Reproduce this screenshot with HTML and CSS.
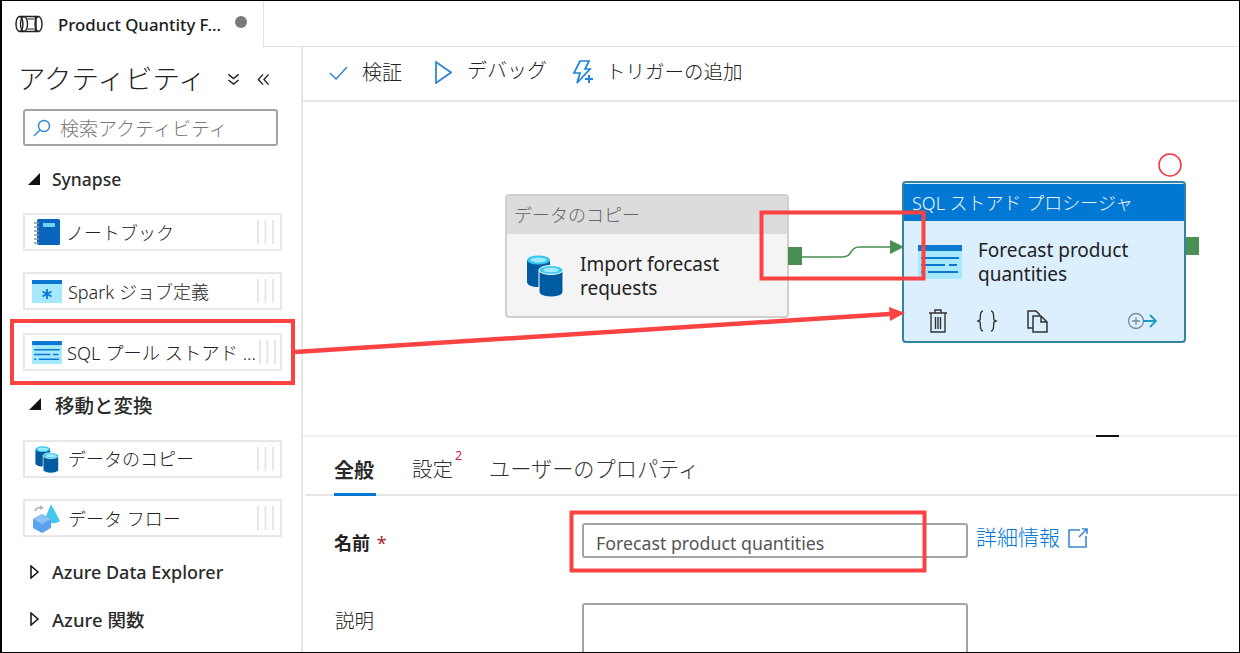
FILE: index.html
```html
<!DOCTYPE html>
<html lang="ja">
<head>
<meta charset="utf-8">
<title>Product Quantity Forecast</title>
<link rel="stylesheet" href="styles.css">
</head>
<body>
<svg class="defs" width="0" height="0">
  <defs>
    <symbol id="i-db" viewBox="0 0 38 42">
      <path d="M1 5v22c0 3 5 5 11 5s12-2 12-5V5z" fill="#005ba1"/>
      <ellipse cx="12.500" cy="5" rx="11.500" ry="4.500" fill="#37c6f0"/>
      <ellipse cx="12.500" cy="5" rx="8" ry="2.500" fill="#9cebff"/>
      <path d="M13 15v22c0 3 6 5 12 5s12-2 12-5V15z" fill="#005ba1" stroke="#fff" stroke-width="1"/>
      <ellipse cx="25" cy="15" rx="12" ry="4.500" fill="#37c6f0" stroke="#fff" stroke-width="1"/>
      <ellipse cx="25" cy="15" rx="8" ry="2.500" fill="#9cebff"/>
    </symbol>
    <symbol id="i-sql" viewBox="0 0 44 34">
      <rect width="44" height="34" rx="1" fill="#a6e9ff"/>
      <rect width="44" height="6" fill="#0a78d1"/>
      <path d="M3 13h38M3 20h24M31 20h8M3 27h3M10 27h30" stroke="#0a78d1" stroke-width="2"/>
    </symbol>
  </defs>
</svg>
<div class="frame">
  <header class="tabbar">
    <div class="tab">
      <svg class="tab-icon" width="28" height="18" viewBox="0 0 28 18" fill="none" stroke="#222" stroke-width="1.400">
        <ellipse cx="4.500" cy="9" rx="3.500" ry="7.500"/>
        <ellipse cx="9" cy="9" rx="3.500" ry="7.500"/>
        <path d="M4.500 1.500h19M4.500 16.500h19" />
        <path d="M12.500 4h8M12.500 14h8" stroke-width="1"/>
        <path d="M20 1.500c1.500 2 1.500 13 0 15"/>
        <ellipse cx="23.500" cy="9" rx="3.500" ry="7.500"/>
      </svg>
      <span class="tab-title">Product Quantity F...</span>
      <span class="tab-dot"></span>
    </div>
  </header>
  <div class="workspace">
    <aside class="sidebar">
      <div class="side-head">
        <h1 class="side-title">アクティビティ</h1>
        <svg class="side-btn" width="13" height="13" viewBox="0 0 14 14" fill="none" stroke="#222" stroke-width="1.500"><path d="M1.500 1.500L7 6l5.500-4.500M1.500 7.500L7 12l5.500-4.500"/></svg>
        <svg class="side-btn" width="13" height="13" viewBox="0 0 14 14" fill="none" stroke="#222" stroke-width="1.500"><path d="M6.500 1.500L1.500 7l5 5.500M12.500 1.500L7.500 7l5 5.500"/></svg>
      </div>
      <div class="search">
        <svg width="18" height="18" viewBox="0 0 18 18" fill="none" stroke="#2f86d8" stroke-width="1.400"><circle cx="11" cy="7" r="5.500"/><path d="M7 11l-6 6"/></svg>
        <span class="search-text">検索アクティビティ</span>
      </div>
      <div class="group group-open"><svg width="12" height="12" viewBox="0 0 12 12"><path d="M12 0v12H0z" fill="#111"/></svg><span>Synapse</span></div>
      <div class="item item-first">
        <svg class="item-icon" width="26" height="27" viewBox="0 0 26 27">
          <rect x="3" y="0" width="23" height="26" rx="1.500" fill="#0a66bd"/>
          <rect x="9" y="4" width="12" height="4" fill="#6fd3f5"/>
          <path d="M0 4h5M0 8h5M0 12h5M0 16h5M0 20h5M0 24h5" stroke="#8a97a5" stroke-width="1.500"/>
        </svg>
        <span class="item-label">ノートブック</span><span class="grip"></span>
      </div>
      <div class="item item-spark">
        <svg class="item-icon wide" width="30" height="23" viewBox="0 0 30 23">
          <rect width="30" height="23" fill="#a6e9ff"/>
          <rect width="30" height="4" fill="#0a78d1"/>
          <path d="M15 9v10M10.500 11.500l9 5M19.500 11.500l-9 5" stroke="#0a78d1" stroke-width="1.800"/>
        </svg>
        <span class="item-label">Spark ジョブ定義</span><span class="grip"></span>
      </div>
      <div class="item item-sql">
        <svg class="item-icon wide" width="30" height="23"><use href="#i-sql"/></svg>
        <span class="item-label">SQL プール ストアド ...</span><span class="grip"></span>
      </div>
      <div class="group group-move"><svg width="12" height="12" viewBox="0 0 12 12"><path d="M12 0v12H0z" fill="#111"/></svg><span>移動と変換</span></div>
      <div class="item item-copy">
        <svg class="item-icon" width="26" height="27"><use href="#i-db"/></svg>
        <span class="item-label">データのコピー</span><span class="grip"></span>
      </div>
      <div class="item item-spark">
        <svg class="item-icon wide" width="30" height="29" viewBox="0 0 30 29">
          <path d="M19 0l9 17c-3 3-13 3-16 0z" fill="#45c8ee"/>
          <path d="M1 15l9-5 9 5v9l-9 5-9-5z" fill="#5ba1ec"/>
          <path d="M1 15l9 5 9-5-9-5z" fill="#8cc0f5"/>
          <path d="M3 7c1-3 4-4 7-3" fill="none" stroke="#b5b5b5" stroke-width="1.800"/>
          <path d="M8 1l4 3-4 2z" fill="#b5b5b5"/>
        </svg>
        <span class="item-label">データ フロー</span><span class="grip"></span>
      </div>
      <div class="group group-closed"><svg width="10" height="14" viewBox="0 0 10 14" fill="none" stroke="#111" stroke-width="1.500"><path d="M1 1l7 6-7 6z"/></svg><span>Azure Data Explorer</span></div>
      <div class="group group-closed2"><svg width="10" height="14" viewBox="0 0 10 14" fill="none" stroke="#111" stroke-width="1.500"><path d="M1 1l7 6-7 6z"/></svg><span>Azure 関数</span></div>
    </aside>
    <main class="main">
      <nav class="toolbar">
        <button class="tool tool-check">
          <svg width="19" height="14" viewBox="0 0 19 14" fill="none" stroke="#2f86d8" stroke-width="1.500"><path d="M1 7l6 6L18 1"/></svg>
          <span>検証</span>
        </button>
        <button class="tool tool-debug">
          <svg width="17" height="23" viewBox="0 0 17 23" fill="none" stroke="#2f86d8" stroke-width="1.800"><path d="M1 1l15 10.500L1 22z"/></svg>
          <span>デバッグ</span>
        </button>
        <button class="tool tool-trigger">
          <svg width="22" height="25" viewBox="0 0 22 25" fill="none" stroke="#1c85dc" stroke-width="1.700"><path d="M8 1h9l-4 8h5L5 23l3-10H2z"/><path d="M17 15v8M13 19h8" stroke-width="2"/></svg>
          <span>トリガーの追加</span>
        </button>
      </nav>
      <section class="canvas">
        <article class="node node-copy">
          <div class="node-type">データのコピー</div>
          <div class="node-body">
            <svg class="node-icon" width="38" height="42"><use href="#i-db"/></svg>
            <div class="node-name">Import forecast requests</div>
          </div>
        </article>
        <span class="port port-copy"></span>
        <svg class="link" width="104" height="22" viewBox="0 0 104 22" fill="none">
          <path d="M0 20h40c12 0 6-10 18-10h32" stroke="#4a8f53" stroke-width="1.500"/>
          <path d="M88 3l14 7-14 7z" fill="#4a8f53"/>
        </svg>
        <article class="node node-sql">
          <div class="node-type">SQL ストアド プロシージャ</div>
          <div class="node-body node-body-sql">
            <svg class="node-icon" width="44" height="34"><use href="#i-sql"/></svg>
            <div class="node-name">Forecast product quantities</div>
          </div>
          <div class="node-actions">
            <svg width="20" height="24" viewBox="0 0 20 24" fill="none" stroke="#333" stroke-width="1.400"><path d="M1 4h18M7 4V1h6v3M3 4v19h14V4M7.500 8v12M10 8v12M12.500 8v12"/></svg>
            <svg class="act-json" width="22" height="24" viewBox="0 0 22 22" fill="none" stroke="#333" stroke-width="1.400"><path d="M7 1c-4 0-2 8-3 9l-2 1 2 1c1 1-1 9 3 9M15 1c4 0 2 8 3 9l2 1-2 1c-1 1 1 9-3 9"/></svg>
            <svg class="act-copy" width="21" height="23" viewBox="0 0 21 23" fill="none" stroke="#333" stroke-width="1.500"><path d="M6 18H1V1h8l4 4M6 6h8l6 6v10H6zM14 6v6h6"/></svg>
            <svg class="act-add" width="30" height="18" viewBox="0 0 30 18" fill="none"><circle cx="9" cy="9" r="7.500" stroke="#7b8a96" stroke-width="1.300"/><path d="M5 9h8M9 5v8" stroke="#7b8a96" stroke-width="1.300"/><path d="M16 9h13M23 3l6 6-6 6" stroke="#1b9ac6" stroke-width="1.800"/></svg>
          </div>
        </article>
        <span class="port port-sql"></span>
      </section>
      <div class="splitter"><span class="grab"></span></div>
      <section class="panel">
        <div class="tabs">
          <span class="ptab ptab-active">全般</span>
          <span class="ptab ptab-set">設定<sup class="badge">2</sup></span>
          <span class="ptab ptab-user">ユーザーのプロパティ</span>
        </div>
        <div class="row row-name">
          <label class="label label-strong">名前 <em class="req">*</em></label>
          <div class="input">Forecast product quantities</div>
          <a class="more">詳細情報</a>
          <svg class="ext" width="20" height="20" viewBox="0 0 20 20" fill="none" stroke="#3a87d8" stroke-width="1.600"><path d="M12 2H1v17h17V8M11 9l8-8M14 1h5v5"/></svg>
        </div>
        <div class="row row-desc">
          <label class="label">説明</label>
          <div class="textarea"></div>
        </div>
      </section>
    </main>
  </div>
  <svg class="notes" width="1240" height="653" viewBox="0 0 1240 653" fill="none">
    <rect x="12" y="321" width="281" height="62" stroke="#fb4343" stroke-width="4"/>
    <rect x="761.500" y="212.500" width="162" height="66" stroke="#fb4343" stroke-width="4"/>
    <rect x="571.500" y="512.500" width="353" height="58" stroke="#fb4343" stroke-width="4"/>
    <path d="M295 352L890 314" stroke="#fb4343" stroke-width="4.500"/>
    <path d="M889 307l16 6-15 8z" fill="#fb4343"/>
    <circle cx="1170" cy="165" r="11" stroke="#f5333f" stroke-width="1.500"/>
  </svg>
</div>
</body>
</html>
```
FILE: styles.css
```css
* { box-sizing: border-box; }
html, body { margin: 0; padding: 0; background: #fff; }
body { font-family: "Noto Sans", "Noto Sans CJK JP", sans-serif; color: #222; }
.defs { position: absolute; }
.frame { position: relative; width: 1240px; height: 653px; border: 1px solid #000; border-width: 1px 1px 1px 2px; overflow: hidden; display: flex; flex-direction: column; background: #fff; }

.tabbar { height: 46px; flex: none; display: flex; }
.tab { width: 262px; height: 46px; display: flex; align-items: center; padding-left: 13px; border-right: 1px solid #e3e3e3; }
.tabbar::after { content: ""; flex: 1; border-bottom: 1px solid #e3e3e3; }
.tab-title { margin-left: 15px; font-size: 16.800px; font-weight: 500; white-space: nowrap; color: #1c1c1c; }
.tab-dot { width: 12px; height: 12px; border-radius: 50%; background: #7a7a7a; margin-left: 14px; margin-top: -4px; }

.workspace { flex: 1; display: flex; min-height: 0; }
.sidebar { width: 301px; flex: none; border-right: 2px solid #e6e6e6; padding-left: 21px; display: flex; flex-direction: column; }
.side-head { height: 62px; padding-top: 2px; display: flex; align-items: center; flex: none; }
.side-title { margin: 0 22px 0 -5px; font-size: 27.500px; font-weight: 300; line-height: 1; width: 187px; white-space: nowrap; color: #222; }
.side-btn { margin-left: 0; }
.side-btn + .side-btn { margin-left: 17px; }
.search { width: 255px; height: 37px; flex: none; border: 2px solid #a3a3a3; border-radius: 3px; display: flex; align-items: center; padding-left: 8px; }
.search-text { margin-left: 9px; font-size: 19px; font-weight: 300; color: #777; white-space: nowrap; }

.group { height: 40px; flex: none; margin-top: 14px; display: flex; align-items: center; padding-left: 7px; font-size: 17.500px; font-weight: 500; color: #2b2b2b; white-space: nowrap; }
.group span { margin-left: 12px; }
.group-open { padding-left: 5px; margin-top: 13px; margin-bottom: 1px; }
.group-move { margin-top: 13px; margin-bottom: 2px; font-size: 19.500px; padding-left: 6px; }
.group-move span { margin-left: 14px; }
.group-closed { margin-top: 15px; }
.group-closed2 { margin-top: 7px; }
.group-closed span, .group-closed2 span { margin-left: 12px; font-size: 18px; }
.group-closed2 span { font-size: 18.500px; }

.item { width: 259px; height: 38px; flex: none; border: 2px solid #e8e8e8; display: flex; align-items: center; padding-left: 9px; }
.item-first { margin-top: 13px; }
.item-spark { margin-top: 21px; }
.item-sql { margin-top: 23px; }
.item-copy { margin-top: 14px; }
.item-icon { flex: none; margin-right: 6px; }
.item-copy .item-icon { margin-right: 8px; }
.item-copy .item-label { padding-bottom: 2px; }
.item-icon.wide { margin-left: -2px; margin-right: 6px; }
.item-label { flex: 1; font-size: 18px; font-weight: 300; white-space: nowrap; color: #222; overflow: hidden; }
.grip { width: 17px; height: 24px; margin-right: 6px; flex: none; background: linear-gradient(90deg, #e6e6e6 2px, transparent 2px) 0 0 / 7.500px 100% repeat-x; }
.item-sql .item-label { font-size: 18.300px; }
.item-sql .item-icon { margin-right: 5px; }
.item-sql .grip { margin-right: 4px; }

.main { flex: 1; min-width: 0; display: flex; flex-direction: column; }
.toolbar { height: 55px; flex: none; border-bottom: 2px solid #e6e6e6; display: flex; align-items: center; padding-left: 26px; padding-bottom: 2px; }
.tool { border: 0; background: none; padding: 0; font: inherit; font-size: 20px; font-weight: 300; color: #222; display: flex; align-items: center; white-space: nowrap; }
.tool-check span { margin-left: 14px; margin-top: -3px; }
.tool-debug { margin-left: 33px; }
.tool-debug span { margin-left: 15px; margin-top: -6px; }
.tool-trigger { margin-left: 25px; font-size: 19.500px; }
.tool-trigger span { margin-left: 12px; margin-top: -5px; }

.canvas { position: relative; height: 333px; flex: none; }
.node { position: absolute; width: 284px; border-radius: 4px; overflow: hidden; }
.node-copy { left: 202px; top: 92px; height: 124px; border: 2px solid #cfcfcf; background: #f4f4f4; }
.node-sql { left: 599px; top: 79px; height: 162px; border: 2px solid #35839f; background: #dcefff; }
.node-type { height: 38px; padding: 0 7px; font-size: 18px; font-weight: 300; line-height: 38px; white-space: nowrap; }
.node-copy .node-type { background: #dcdcdc; color: #666; }
.node-sql .node-type { background: #0078d4; color: #f2f8fd; height: 37px; line-height: 39px; margin-top: 1px; font-size: 18px; padding-left: 8px; }
.node-body { display: flex; align-items: center; padding: 18px 0 0 19px; }
.node-icon { flex: none; }
.node-name { margin-left: 16px; font-size: 19px; line-height: 24px; width: 190px; color: #222; font-weight: 400; }
.node-body-sql { padding: 17px 0 0 14px; }
.node-body-sql .node-name { margin-left: 16px; width: 205px; }
.node-actions { position: absolute; left: 24px; top: 126px; display: flex; align-items: center; }
.act-json { margin-left: 28px; }
.act-copy { margin-left: 29px; }
.act-add { margin-left: 79px; }
.port { position: absolute; background: #4a8f53; }
.port-copy { left: 485px; top: 145px; width: 14px; height: 18px; }
.port-sql { left: 883px; top: 135px; width: 13px; height: 18px; }
.link { position: absolute; left: 499px; top: 135px; }

.splitter { height: 2px; flex: none; background: #efefef; position: relative; }
.grab { position: absolute; left: 793px; top: 0; width: 23px; height: 2px; background: #111; }

.panel { flex: 1; min-height: 0; padding-left: 2px; }
.tabs { height: 59px; border-bottom: 2px solid #e6e6e6; display: flex; align-items: flex-end; padding-left: 29px; }
.ptab { font-size: 20.500px; font-weight: 300; line-height: 34px; height: 42px; white-space: nowrap; color: #333; position: relative; }
.ptab-active { font-weight: 700; width: 42px; border-bottom: 3px solid #0078d4; margin-bottom: -2px; color: #2b2b2b; height: 43px; line-height: 36px; font-size: 20px; }
.ptab-set { margin-left: 36px; width: 40px; }
.ptab-user { margin-left: 37px; font-size: 21.200px; }
.badge { position: absolute; left: 43px; top: -6px; font-size: 12.500px; color: #d1213d; font-weight: 400; line-height: 20px; }

.row { display: flex; position: relative; }
.row-name { margin-top: 27px; height: 35px; align-items: center; }
.row-desc { margin-top: 45px; }
.label { width: 277px; padding-left: 29px; font-size: 18px; flex: none; font-weight: 300; }
.label-strong { font-weight: 700; padding-top: 2px; }
.req { font-style: normal; color: #a4262c; font-weight: 400; margin-left: 2px; }
.row-desc .label { padding: 2px 0 0 30px; font-size: 19.500px; color: #222; }
.input { width: 386px; height: 35px; border: 2px solid #a3a3a3; border-radius: 3px; padding: 2px 0 0 12px; font-size: 17.750px; line-height: 33px; color: #555; font-weight: 400; white-space: nowrap; }
.textarea { width: 386px; height: 60px; border: 2px solid #a3a3a3; border-radius: 3px; }
.more { margin-left: 8px; margin-top: -10px; font-size: 21px; font-weight: 300; color: #0078d4; white-space: nowrap; }
.ext { margin-left: 8px; margin-top: -6px; }
.notes { position: absolute; left: -2px; top: -1px; pointer-events: none; }
```
